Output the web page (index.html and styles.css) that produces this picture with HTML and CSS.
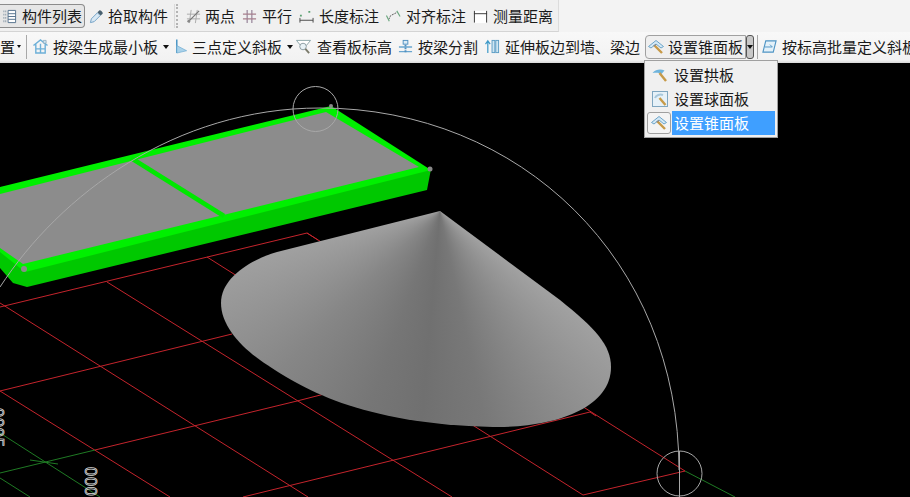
FILE: index.html
```html
<!DOCTYPE html>
<html lang="en">
<head>
    <meta charset="UTF-8">
    <meta name="viewport" content="width=device-width, initial-scale=1.0">
    <title>设置锥面板</title>
    <link rel="stylesheet" href="styles.css">
</head>
<body>
    <svg class="defs" width="0" height="0">
        <symbol id="hammer" viewBox="0 0 16 16">
            <path d="M.5 7.500 8 1.500 15.500 7.500 13 9 8 5 3 9Z" fill="#d4e9f6" stroke="#5f9cc4" stroke-width=".9"/>
            <path d="M6.500 6.500 14 14" stroke="#c79a48" stroke-width="2.400"/>
            <path d="M5.500 7 8 5.500" stroke="#8a8a8a" stroke-width="1.200"/>
        </symbol>
    </svg>

    <div class="toolbar">
        <div class="row row-one">
            <div class="tool tool-active">
                <svg class="icon" viewBox="0 0 16 16"><path d="M1.500 2.500h3M1.500 6h3M1.500 9.500h3M1.500 13h3" stroke="#8a9aa8" stroke-width="2" stroke-dasharray="1 1"/><path d="M6.500 1.500h8v13h-8zM6.500 5h8M6.500 8h8M6.500 11h8" fill="#fff" stroke="#53708c"/></svg>
                <span>构件列表</span>
            </div>
            <div class="tool tool-pick">
                <svg class="icon" viewBox="0 0 16 16"><path d="M1.500 14.500 2.500 10.500 9 4 12 7 5.500 13.500Z" fill="#d8e8f4" stroke="#6f9fc4"/><path d="M9 3.500 11 1.500C12 .5 15.500 4 14.500 5L12.500 7Z" fill="#49606f"/></svg>
                <span>拾取构件</span>
            </div>
            <i class="grip"></i>
            <div class="tool tool-first">
                <svg class="icon" viewBox="0 0 16 16"><path d="M5.500 1 3.500 15M12 1 10 15M1 5.500H15M1 10.500H15" stroke="#a9a9a9"/><path d="M2 14 14 2" stroke="#777" stroke-width="1.300"/><circle cx="3" cy="13" r="1.500" fill="#888"/></svg>
                <span>两点</span>
            </div>
            <div class="tool">
                <svg class="icon" viewBox="0 0 16 16"><path d="M5.500 1V15M10.500 1V15" stroke="#97859a" stroke-width="1.300"/><path d="M1 5.500H15M1 10.500H15" stroke="#a67f8c" stroke-width="1.300"/></svg>
                <span>平行</span>
            </div>
            <div class="tool">
                <svg class="icon" viewBox="0 0 16 16"><path d="M1 9.500V14.500M15 9.500V14.500M1 12H15" stroke="#444"/><path d="M1 7h3M10 3h3" stroke="#5aa070" stroke-width="2" stroke-dasharray="2 1"/></svg>
                <span>长度标注</span>
            </div>
            <div class="tool">
                <svg class="icon" viewBox="0 0 16 16"><path d="M3 11 5 7 12 3.500" stroke="#555" stroke-dasharray="2 1" fill="none"/><path d="M.5 7 3.500 13M11.500 2 15 8" stroke="#6ba77f" stroke-width="1.200"/></svg>
                <span>对齐标注</span>
            </div>
            <div class="tool">
                <svg class="icon" viewBox="0 0 16 16"><rect x="1" y="2" width="14" height="13" fill="#fff"/><path d="M1.500 2V14.500M14.500 2V14.500M1 5H15" stroke="#333"/></svg>
                <span>测量距离</span>
            </div>
        </div>

        <div class="row row-two">
            <span class="cut-label">置</span>
            <i class="caret caret-small"></i>
            <i class="sep"></i>
            <div class="tool tool-wide">
                <svg class="icon" viewBox="0 0 16 16"><path d="M.5 7 8 1 15.500 7M3 5.500V15H13V5.500M3 10.500H13M8 5V15" fill="none" stroke="#6db0d8" stroke-width="1.500"/><path d="M11 1.500h3v3h-3z" fill="#cfe6f2" stroke="#7f9fb4" stroke-width=".7"/></svg>
                <span>按梁生成最小板</span>
            </div>
            <i class="caret"></i>
            <div class="tool tool-narrow">
                <svg class="icon icon-thin" viewBox="0 0 14 16"><path d="M2.500 .5V15" stroke="#3f8fc0" stroke-width="1.500"/><path d="M2.500 7 13 12.500 2.500 15Z" fill="#a9d2ea" stroke="#6aa8cf" stroke-width=".7"/></svg>
                <span>三点定义斜板</span>
            </div>
            <i class="caret"></i>
            <div class="tool tool-tight">
                <svg class="icon" viewBox="0 0 16 16"><path d="M.5 1.500H15.500L11 7H5Z" fill="#fff" stroke="#8aa4a8"/><circle cx="7.500" cy="8" r="3.500" fill="#e8f2f6" stroke="#8a9aa0"/><path d="M10 10.500 14 15" stroke="#7a7a6a" stroke-width="2"/></svg>
                <span>查看板标高</span>
            </div>
            <div class="tool tool-split">
                <svg class="icon" viewBox="0 0 16 16"><rect x="5.500" y="1.500" width="5" height="4" fill="#dcecf6" stroke="#4f8fc0"/><path d="M1 8.500H15M1 13.500H15" stroke="#6aa6d0" stroke-width="1.500"/><path d="M8 6V15" stroke="#4f8fc0" stroke-width="2" stroke-dasharray="2 1"/></svg>
                <span>按梁分割</span>
            </div>
            <div class="tool tool-next">
                <svg class="icon" viewBox="0 0 16 16"><path d="M3 15V3M.5 5.500 3 2 5.500 5.500" fill="none" stroke="#3f9ac8" stroke-width="1.300"/><rect x="7.500" y="1.500" width="3" height="13" fill="#cfe6f2" stroke="#5a9cc4"/><rect x="11.500" y="1.500" width="3" height="13" fill="#cfe6f2" stroke="#5a9cc4"/></svg>
                <span>延伸板边到墙、梁边</span>
            </div>
            <div class="split-button">
                <div class="split-main">
                    <svg class="icon icon-cone"><use href="#hammer"/></svg>
                    <span>设置锥面板</span>
                </div>
                <div class="split-arrow"><i class="caret"></i></div>
            </div>
            <i class="sep sep-after"></i>
            <div class="tool tool-last">
                <svg class="icon" viewBox="0 0 16 16"><path d="M4 2H15L12 14H1Z" fill="#e4f1f9" stroke="#4f94c4" stroke-width="1.200"/><path d="M3 8.500H11L8.500 6" fill="none" stroke="#4f94c4"/></svg>
                <span>按标高批量定义斜板</span>
            </div>
        </div>
    </div>

    <div class="viewport">
        <svg class="scene" viewBox="0 63 910 434">
            <g class="grid-red">
                <path d="M0 303 308 497M107 282 452 497M207 257 583 495M307 233 685 471M0 391 170 497"/>
                <path d="M0 307 307 233 318 240M0 391 232 334M95 450 297 401 340 390M243 497 590 412 596 416M583 495 685 471"/>
            </g>
            <g class="grid-green">
                <path d="M0 433 100 497M0 478 30 497M0 473 95 450M30 460 58 464M685 471 735 497"/>
            </g>
            <polygon class="side" points="0,250 24,269 431,169 427,190 27,287 13,283 0,268"/>
            <polygon class="top" points="0,187 331,106 431,170 25,272 0,252"/>
            <polygon class="slab" points="0,194 326,112 419,167 23,264 0,248"/>
            <line class="beam" x1="131" y1="158" x2="224" y2="216"/>
            <circle class="dot" cx="24" cy="269" r="3"/>
            <circle class="dot" cx="430" cy="169" r="2.500"/>
            <circle class="dot" cx="331" cy="106" r="2"/>
            <path class="snap" d="M0 287C60 195 175 108 320 108C520 108 679 260 679 470"/>
            <circle class="snap" cx="315.500" cy="109" r="22.500"/>
            <circle class="snap" cx="679.500" cy="473.500" r="22.500"/>
            <path class="snap" d="M679.500 451V497"/>
            <text class="axis-label" transform="translate(85 467) rotate(90)">000</text>
            <text class="axis-label" transform="translate(-8 408) rotate(90)">0005</text>
        </svg>
        <div class="cone"></div>

        <ul class="menu">
            <li class="menu-item">
                <svg class="menu-icon" viewBox="0 0 16 16"><path d="M.5 6C4 2 9 2 12.500 3.500L9.500 7C7 5.500 4 5.500 .5 6Z" fill="#6fb4dc"/><path d="M7.500 6 14 14" stroke="#c79a48" stroke-width="2.400"/></svg>
                <span>设置拱板</span>
            </li>
            <li class="menu-item">
                <svg class="menu-icon" viewBox="0 0 16 16"><rect x=".5" y=".5" width="15" height="15" fill="#e6f1f8" stroke="#7fa6c0"/><path d="M3 7C4 4 8 3 11 4" fill="none" stroke="#a8c8dc" stroke-width="2"/><path d="M7.500 7 13.500 14" stroke="#c79a48" stroke-width="2.400"/></svg>
                <span>设置球面板</span>
            </li>
            <li class="menu-item menu-item-active">
                <span class="menu-check"><svg class="menu-icon"><use href="#hammer"/></svg></span>
                <span class="menu-label">设置锥面板</span>
            </li>
        </ul>
    </div>
</body>
</html>
```

FILE: styles.css
```css
html, body {
    margin: 0;
    height: 100%;
    overflow: hidden;
}
body {
    display: flex;
    flex-direction: column;
    background: #000;
    color: #1a1a1a;
    font-family: "Noto Sans CJK SC", "Noto Sans", sans-serif;
    font-size: 15px;
    line-height: 20px;
}
.defs {
    position: absolute;
}
.toolbar {
    flex: none;
    height: 63px;
    background: #f3f3f3;
}
.row {
    display: flex;
    align-items: center;
    white-space: nowrap;
}
.row-one {
    box-sizing: border-box;
    width: 559px;
    height: 32px;
    padding-top: 1px;
    background: #f0f0f0;
    border-right: 1px solid #dcdcdc;
    border-bottom: 1px solid #d4d4d4;
}
.row-two {
    box-sizing: border-box;
    height: 31px;
    padding-bottom: 2px;
    background: linear-gradient(#f8f8f8, #f2f2f2 90%, #d8d8d8);
}
.tool {
    display: flex;
    flex: none;
    align-items: center;
    gap: 5px;
    margin-left: 7px;
}
.icon {
    display: block;
    flex: none;
    width: 15px;
    height: 15px;
}
.icon-thin {
    width: 14px;
}

/* first row */
.tool-active {
    box-sizing: border-box;
    width: 85px;
    height: 24px;
    margin-left: 0;
    padding-left: 2px;
    background: #e6e6e6;
    border: 1px solid #8c8c8c;
    border-left: none;
    border-radius: 0 4px 4px 0;
}
.tool-pick {
    margin-left: 4px;
    gap: 4px;
}
.tool-first {
    margin-left: 6px;
    gap: 4px;
}
.grip {
    width: 1px;
    height: 24px;
    margin-left: 6px;
    margin-right: 2px;
    border-left: 1px solid #dadada;
    border-right: 2px dotted #b4b4b4;
}

/* second row */
.cut-label {
    width: 15px;
}
.caret {
    flex: none;
    width: 0;
    height: 0;
    margin-left: 5px;
    border-top: 4px solid #111;
    border-left: 3.500px solid transparent;
    border-right: 3.500px solid transparent;
}
.caret-small {
    margin-left: 2px;
    border-top-width: 3px;
    border-left-width: 2.500px;
    border-right-width: 2.500px;
}
.sep {
    flex: none;
    width: 1px;
    height: 24px;
    margin-left: 5px;
    background: #a8a8a8;
}
.tool-wide {
    margin-left: 6px;
}
.tool-narrow {
    margin-left: 5px;
    gap: 4px;
}
.tool-tight {
    margin-left: 3px;
    gap: 6px;
}
.tool-split {
    margin-left: 6px;
}
.tool-next {
    margin-left: 7px;
}
.split-button {
    display: flex;
    flex: none;
    height: 24px;
    margin-left: 5px;
}
.split-main {
    display: flex;
    box-sizing: border-box;
    align-items: center;
    gap: 4px;
    width: 101px;
    padding-left: 2px;
    background: #efefef;
    border: 1px solid #a0a0a0;
    border-radius: 4px 0 0 4px;
}
.icon-cone {
    width: 16px;
    height: 16px;
}
.split-arrow {
    display: flex;
    box-sizing: border-box;
    align-items: center;
    justify-content: center;
    width: 8px;
    background: #c8c8c8;
    border: 1px solid #555;
    border-radius: 3px;
}
.split-arrow .caret {
    margin: 0;
    border-left-width: 3px;
    border-right-width: 3px;
}
.sep-after {
    margin-left: 3px;
}
.tool-last {
    margin-left: 4px;
    gap: 5px;
}

/* 3d view */
.viewport {
    position: relative;
    flex: 1;
    background: #000;
}
.scene {
    position: absolute;
    top: 0;
    left: 0;
    width: 910px;
    height: 434px;
}
.grid-red path {
    fill: none;
    stroke: #c4242c;
    stroke-width: 1;
}
.grid-green path {
    fill: none;
    stroke: #1f7a24;
    stroke-width: 1;
}
.side {
    fill: #00c800;
}
.top {
    fill: #00f000;
}
.slab {
    fill: #8c8c8c;
}
.beam {
    stroke: #00e800;
    stroke-width: 4.500;
}
.dot {
    fill: #8a8a8a;
}
.snap {
    fill: none;
    stroke: #a8a8a8;
    stroke-width: 1;
}
.axis-label {
    fill: none;
    stroke: #d8d8d8;
    stroke-width: .8;
    font-family: "Liberation Sans", sans-serif;
    font-size: 16px;
    letter-spacing: 1px;
}
.cone {
    position: absolute;
    top: 137px;
    left: 210px;
    width: 410px;
    height: 235px;
    background: conic-gradient(from 0deg at 230px 11px,
        #a6a6a6 0deg,
        #a6a6a6 122deg,
        #8c8c8c 148deg,
        #787878 168deg,
        #707070 185deg,
        #767676 200deg,
        #868686 225deg,
        #a2a2a2 258deg,
        #a6a6a6 360deg);
    clip-path: path("M230 11L67 52C40 60 11 78 11 103C11 125 30 146 50 160C90 188 150 224 283 227C340 228 401 210 401 167C401 145 385 128 350 100Z");
}

/* dropdown */
.menu {
    position: absolute;
    top: -3px;
    left: 644px;
    box-sizing: border-box;
    width: 134px;
    height: 78px;
    margin: 0;
    padding: 2px 2px 0 2px;
    list-style: none;
    background: #f0f0f0;
    border: 1px solid #a0a0a0;
}
.menu-item {
    display: flex;
    align-items: center;
    gap: 6px;
    height: 24px;
    padding-left: 5px;
}
.menu-icon {
    display: block;
    flex: none;
    width: 16px;
    height: 16px;
}
.menu-item-active {
    gap: 1px;
    padding-left: 0;
}
.menu-check {
    display: flex;
    box-sizing: border-box;
    align-items: center;
    justify-content: center;
    width: 24px;
    height: 22px;
    background: #f4f4f4;
    border: 1px solid #a0a0a0;
    border-radius: 3px;
}
.menu-label {
    flex: 1;
    padding-left: 2px;
    line-height: 24px;
    background: #3f9fff;
    color: #fff;
}
```
